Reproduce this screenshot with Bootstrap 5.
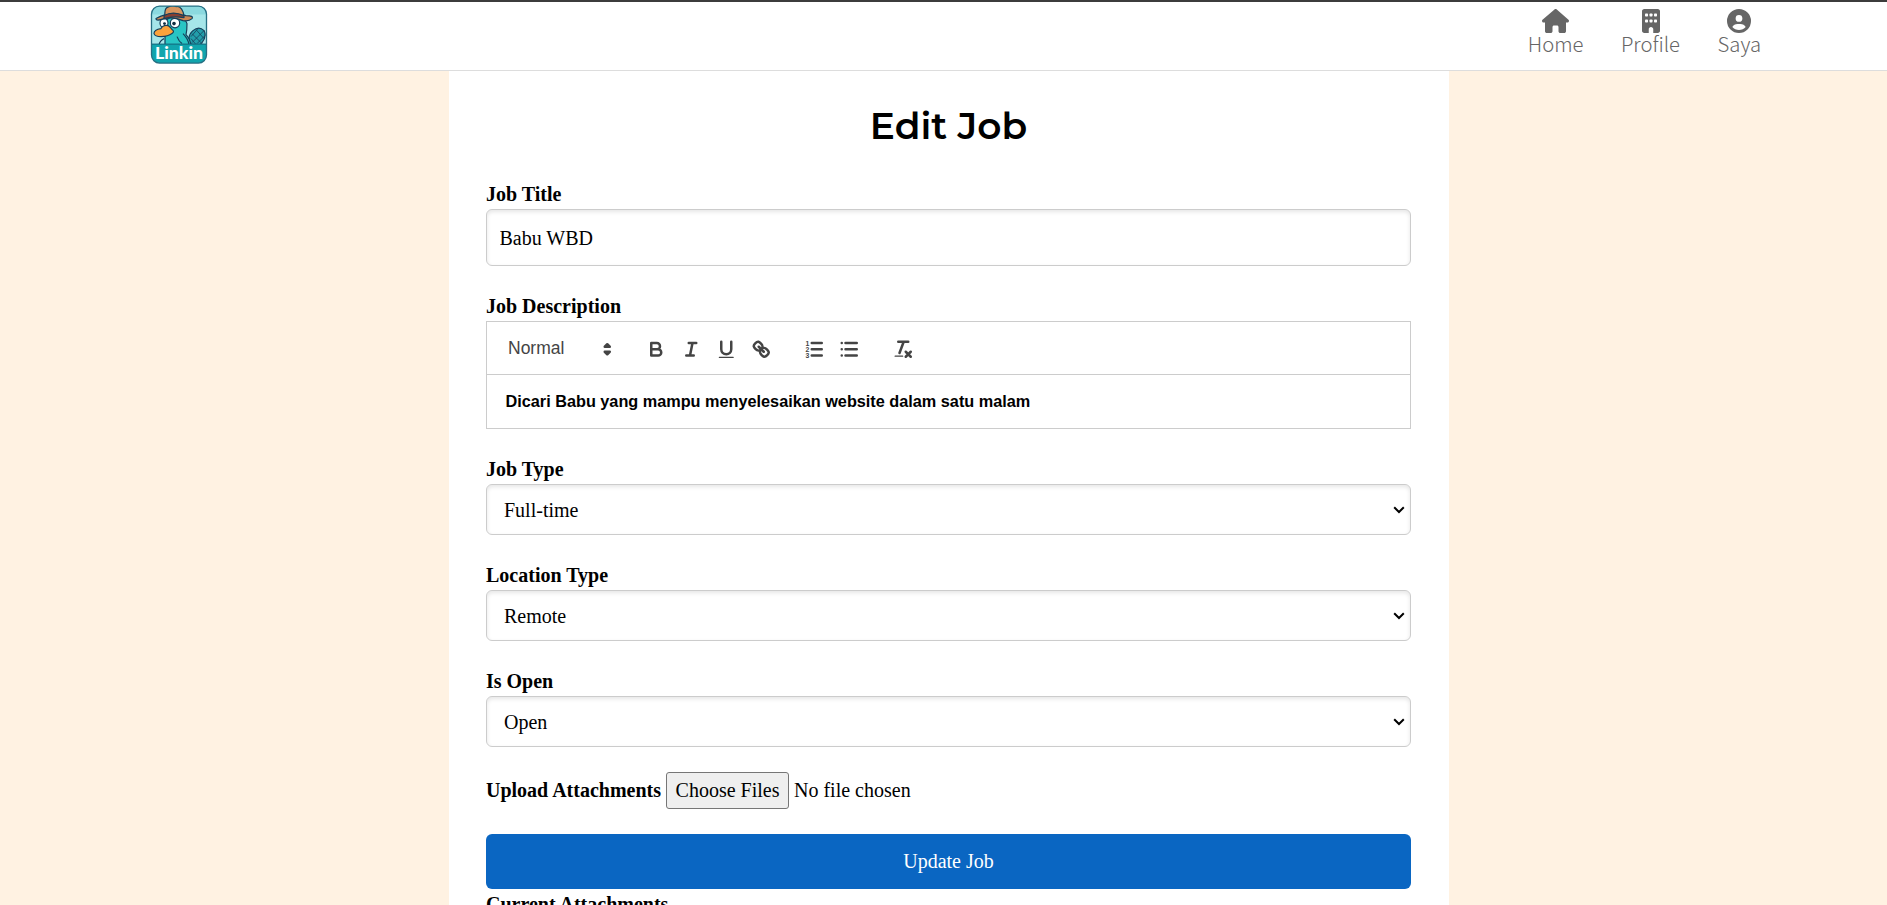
<!DOCTYPE html>
<html lang="en">
<head>
<meta charset="utf-8">
<title>Edit Job</title>
<link rel="stylesheet" href="https://cdn.jsdelivr.net/npm/bootstrap@5.3.0/dist/css/bootstrap.min.css">
<style>
body{background:#fff2e2;color:#000;font:20px/23px "Liberation Serif",serif;height:905px;overflow:hidden}
.topbar{height:71px;background:#fff;border-top:2px solid #3c3c3c;border-bottom:1px solid #ddd;padding:0 126px 0 150px}
.topbar svg{display:block}
.menu{gap:37.5px;padding-top:7px;height:68px}
.menu a{color:#666;text-decoration:none;font:300 20.3px/22px "Noto Sans CJK SC","Open Sans",sans-serif}
.menu svg{height:24px;fill:#666;margin-bottom:-1px}
.panel{width:1000px;margin-left:449px;padding:0 38px 0 37px;background:#fff;height:834px;overflow:hidden}
.panel h1{font:600 37.5px/44px Montserrat,Inter,sans-serif;margin:0;padding-top:33px;height:112px;white-space:nowrap}
.field{margin-bottom:29px}
.field label,.strong-label{font-weight:700;display:block;line-height:23px}
.field label{margin-bottom:3px}
.field .form-control,.field .form-select{font:inherit;color:#000;border:1px solid #ccc;border-radius:6px;box-shadow:inset 0 2px 4px rgba(0,0,0,.1);background-color:#fff}
.field .form-control{height:57px;padding:2px 12.5px 0}
.field .form-select{height:51px;padding:2px 17px 0;background-image:url("data:image/svg+xml,%3Csvg xmlns='http://www.w3.org/2000/svg' viewBox='0 0 12 8'%3E%3Cpath d='M1.2 1.3 6 6 10.8 1.3' fill='none' stroke='%23000' stroke-width='2'/%3E%3C/svg%3E");background-size:12px 8px;background-position:right 5px center}
.editor{border:1px solid #ccc;height:108px;font-family:"Liberation Sans",Arial,sans-serif}
.tools{height:53px;border-bottom:1px solid #ccc;padding:2px 10px 0;color:#444}
.tools svg{width:22.5px;height:22.5px;fill:none;stroke:#444;stroke-width:2;stroke-linecap:round;stroke-linejoin:round;display:block}
.tools .solid{fill:#444;stroke:none}
.tools .both{fill:#444}
.tools .digits{fill:#444;stroke:none;font:700 5.5px "Liberation Sans",sans-serif}
.tool{width:35px;display:flex;justify-content:center}
.tools .cluster{margin-right:18.75px}
.picker{width:122.5px;padding:0 1px 0 11px;font-size:17.5px}
.picker span{margin-bottom:1px}
.editor p{margin:0;padding:15px 18.5px;font-size:16.25px;line-height:23px;font-weight:700}
.choose{border:1px solid #767676;border-radius:3px;background:#efefef;height:37px;width:123px;padding:0;font:inherit;color:#000;margin:0 5px}
.update{background:#0a66c2;color:#fff;font:inherit;height:55px;border:0;border-radius:6px;margin:25px 0 4px;padding:0}
.upload{padding-top:25px}
</style>
</head>
<body>
<nav class="topbar d-flex justify-content-between">
  <svg width="59" height="64" viewBox="0 -.6 59 64" role="img" aria-label="Linkin">
    <defs><clipPath id="tile"><rect x="1.5" y="3.5" width="55" height="57" rx="8"/></clipPath></defs>
    <g clip-path="url(#tile)">
      <rect width="59" height="64" fill="#a5e6e9"/>
      <path d="M0 3h59v9H0z" fill="#8bd9df"/>
      <g stroke="#173f5a" stroke-width="1.2" stroke-linejoin="round">
        <path d="M40 41q-3-8 3-13 6-5 11 0 3 6-2 12l-4 4z" fill="#229eaa"/>
        <path d="M42 31l10 10M46 27l8 9M41 36l5 6M54 28L42 40M48 26l-7 8M55 33l-8 8" fill="none" stroke-width=".8"/>
        <path d="M15 43V20q2-6 11-6t11 7q0 7-1 11 4 4 5 11z" fill="#28c5c4"/>
        <path d="M27 34q2 5 5 7M33 31q5 5 6 11M14 36q-4 2-5 6" fill="none"/>
        <ellipse cx="14" cy="20.500" rx="4" ry="4.500" fill="#fff"/>
        <circle cx="25" cy="20.500" r="4.700" fill="#fff"/>
        <path d="M4 31q0-4 7-5 2-4 7-3 3 2 4 4 3 2 0 4-4 3-11 3-6 0-7-3z" fill="#fba23b"/>
        <path d="M6 16Q20 8 36 13q8 0 6 3-3 3-9 2-9-4-19-2-8 3-8 0z" fill="#cf8753"/>
        <path d="M15 13q-1-8 4-9 4-2 7 0 6-1 8 9-9-2-19 0z" fill="#d9965f"/>
        <path d="M14 13q9-5 20 0v2q-11-2-20 1z" fill="#873f31"/>
      </g>
      <circle cx="14.500" cy="21" r="1.400" fill="#122f42"/><circle cx="24" cy="21" r="1.800" fill="#122f42"/>
      <path d="M0 41.500h59V64H0z" fill="#11a5ad"/><path d="M0 41.500h59" stroke="#15647a"/>
    </g>
    <rect x="1.500" y="3.500" width="55" height="57" rx="8" fill="none" stroke="#266f83" stroke-width="1.300"/>
    <text x="5" y="56.500" textLength="48" lengthAdjust="spacingAndGlyphs" fill="#fff" font-family="Lato,sans-serif" font-weight="900" font-size="16.500">Linkin</text>
  </svg>
  <div class="menu d-flex">
    <a href="#" class="d-flex flex-column align-items-center"><svg viewBox="0 0 576 512"><path d="M575.8 255.500c0 18-15 32.100-32 32.100h-32l.7 160.200c0 2.700-.2 5.400-.5 8.100V472c0 22.100-17.900 40-40 40H392c-22.100 0-40-17.900-40-40v-88c0-17.700-14.300-32-32-32h-64c-17.700 0-32 14.300-32 32v88c0 22.100-17.900 40-40 40h-80c-22.100 0-40-17.900-40-40V287.600H32c-18 0-32-14-32-32.100 0-9 3-17 10-24L266.400 8c7-7 15-8 22-8s15 2 21 7l255.400 224.500c8 7 12 15 11 24z"/></svg>Home</a>
    <a href="#" class="d-flex flex-column align-items-center"><svg viewBox="0 0 384 512"><path d="M48 0C21.500 0 0 21.500 0 48v416c0 26.500 21.500 48 48 48h96v-80c0-26.500 21.500-48 48-48s48 21.500 48 48v80h96c26.500 0 48-21.500 48-48V48c0-26.500-21.500-48-48-48z"/><g fill="#fff"><rect x="64" y="96" width="64" height="64" rx="16"/><rect x="160" y="96" width="64" height="64" rx="16"/><rect x="256" y="96" width="64" height="64" rx="16"/><rect x="64" y="224" width="64" height="64" rx="16"/><rect x="160" y="224" width="64" height="64" rx="16"/><rect x="256" y="224" width="64" height="64" rx="16"/></g></svg>Profile</a>
    <a href="#" class="d-flex flex-column align-items-center"><svg viewBox="0 0 512 512"><path fill-rule="evenodd" d="M399 384.200C376.900 345.800 335.400 320 288 320h-64c-47.400 0-88.900 25.800-111 64.200 35.200 39.200 86.200 63.800 143 63.800s107.800-24.700 143-63.800zM0 256a256 256 0 1 1 512 0A256 256 0 1 1 0 256zm256 16a72 72 0 1 0 0-144 72 72 0 1 0 0 144z"/></svg>Saya</a>
  </div>
</nav>
<main class="panel">
  <h1 class="text-center">Edit Job</h1>
  <div class="field"><label for="title">Job Title</label><input id="title" class="form-control" value="Babu WBD"></div>
  <div class="field">
    <label>Job Description</label>
    <div class="editor">
      <div class="tools d-flex align-items-center">
        <div class="cluster picker d-flex align-items-center justify-content-between"><span>Normal</span><svg viewBox="0 0 18 18"><path class="both" d="M7 11l2 2 2-2zM7 7l2-2 2 2z"/></svg></div>
        <div class="cluster d-flex">
          <div class="tool"><svg viewBox="0 0 18 18"><path d="M5 4h4.500a2.500 2.500 0 0 1 0 5H5zM5 9h5.500a2.500 2.500 0 0 1 0 5H5z"/></svg></div>
          <div class="tool"><svg viewBox="0 0 18 18"><path d="M7 4h6M5 14h6M8 14l2-10"/></svg></div>
          <div class="tool"><svg viewBox="0 0 18 18"><path d="M5 3v6a4 4 0 0 0 8 0V3"/><rect class="solid" x="3" y="15" width="12" height="1" rx=".5"/></svg></div>
          <div class="tool"><svg viewBox="0 0 18 18"><path d="M7 7l4 4M8.900 4.577a3.476 3.476 0 0 1 .36 4.679A3.476 3.476 0 0 1 4.577 8.900C3.185 7.500 2.035 6.400 4.217 4.217S7.500 3.185 8.900 4.577ZM13.423 9.100a3.476 3.476 0 0 0-4.679-.36 3.476 3.476 0 0 0 .36 4.679c1.392 1.392 2.500 2.542 4.679.36S14.815 10.500 13.423 9.100Z"/></svg></div>
        </div>
        <div class="cluster d-flex">
          <div class="tool"><svg viewBox="0 0 18 18"><path d="M7 4h8M7 9h8M7 14h8"/><g class="digits"><text x="1.900" y="6">1</text><text x="1.900" y="11">2</text><text x="1.900" y="16">3</text></g></svg></div>
          <div class="tool"><svg viewBox="0 0 18 18"><path d="M6 4h9M6 9h9M6 14h9M3 4h0M3 9h0M3 14h0"/></svg></div>
        </div>
        <div class="tool"><svg viewBox="0 0 18 18"><path d="M5 3h8M6 12l3.350-9M11 11l4 4M15 11l-4 4"/><rect class="solid" x="2" y="14" width="7" height="1" rx=".5"/></svg></div>
      </div>
      <p>Dicari Babu yang mampu menyelesaikan website dalam satu malam</p>
    </div>
  </div>
  <div class="field"><label for="type">Job Type</label><select id="type" class="form-select"><option>Full-time</option></select></div>
  <div class="field"><label for="loc">Location Type</label><select id="loc" class="form-select"><option>Remote</option></select></div>
  <div class="field mb-0"><label for="open">Is Open</label><select id="open" class="form-select"><option>Open</option></select></div>
  <div class="upload d-flex align-items-center"><span class="strong-label">Upload Attachments</span><button class="choose" type="button">Choose Files</button><span>No file chosen</span></div>
  <button class="btn update w-100 d-block" type="button">Update Job</button>
  <span class="strong-label">Current Attachments</span>
</main>
<script src="https://cdn.jsdelivr.net/npm/bootstrap@5.3.0/dist/js/bootstrap.bundle.min.js"></script>
</body>
</html>
